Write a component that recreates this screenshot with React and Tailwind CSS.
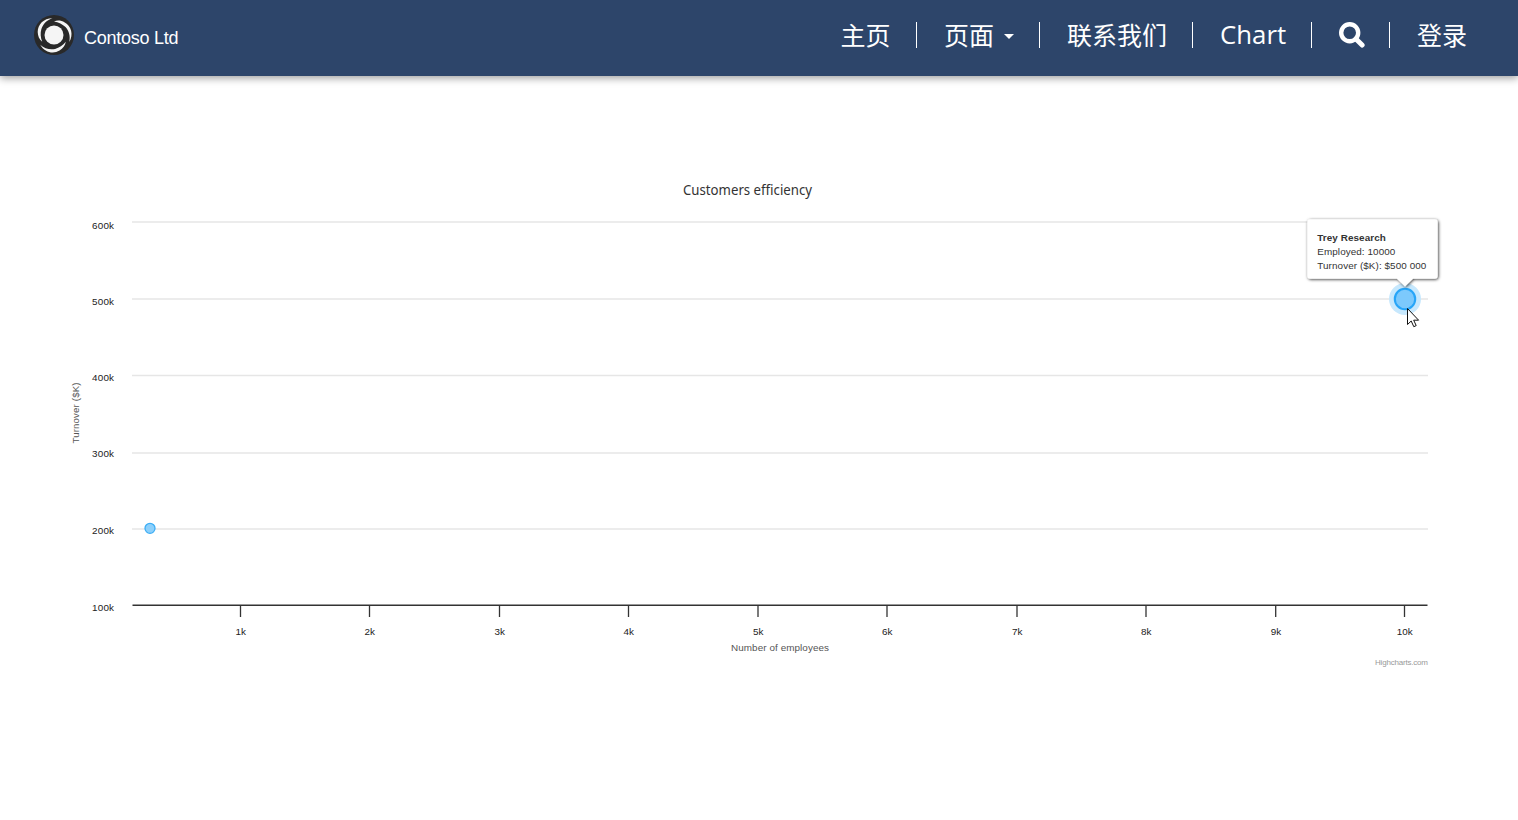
import React from 'react';

const SANS = "font-['Liberation_Sans',Arial,sans-serif]";
const NAV = "font-['Open_Sans','Noto_Sans_CJK_SC',sans-serif]";

const yTicks = [
  { label: '600k', line: 222, text: 229 },
  { label: '500k', line: 299, text: 305 },
  { label: '400k', line: 375.5, text: 381 },
  { label: '300k', line: 453, text: 457 },
  { label: '200k', line: 529, text: 534 },
  { label: '100k', line: null, text: 611 },
];

const xTicks = [240.5, 369.5, 499.5, 628.5, 758, 887, 1017, 1146, 1275.7, 1404.5];

function Logo() {
  return (
    <svg className="size-10 shrink-0" viewBox="0 0 40 40">
      <circle cx="20" cy="20" r="20" fill="#292929" />
      <circle cx="20" cy="20" r="9.5" fill="#f5f5f5" />
      {[0, 120, 240].map((angle) => (
        <path
          key={angle}
          transform={`rotate(${angle} 20 20)`}
          d="M18.5 3.2C9.5 3.2 3.7 9.5 3.7 17C3.8 21 5.2 24.3 8.2 26.8C6.5 22.5 6.2 18 7.4 14C9.1 8.8 13 5 18.5 3.2Z"
          fill="#f5f5f5"
        />
      ))}
    </svg>
  );
}

function Divider() {
  return <span className="mt-[22px] h-[26px] w-px shrink-0 bg-white" />;
}

function Header() {
  return (
    <header className="flex h-[76px] items-start bg-[#2d456a] text-white shadow-[0_2px_8px_rgba(0,0,0,0.4)]">
      <a className="flex pl-[34px] pt-[15px]">
        <Logo />
        <span className={`${SANS} ml-[10px] mt-[10px] text-[18px] leading-[26px] tracking-[-0.26px]`}>Contoso Ltd</span>
      </a>
      <nav className={`${NAV} ml-auto mr-[50px] flex items-start whitespace-nowrap text-[25px] leading-[70px]`}>
        <a className="w-[75.5px]">主页</a>
        <Divider />
        <a className="flex w-[122px] pl-[27px]">
          <span className="w-[50px]">页面</span>
          <svg className="ml-[10px] mt-[34px] h-[5px] w-[10px]" viewBox="0 0 10 5"><path d="M0 0H10L5 5Z" fill="white" /></svg>
        </a>
        <Divider />
        <a className="w-[152px] pl-[27px]">联系我们</a>
        <Divider />
        <a className="w-[118px] pl-[27px] text-[25.8px] leading-[68px]">Chart</a>
        <Divider />
        <a className="w-[77px] pl-[27px]">
          <svg className="mt-[22px] size-[26px]" viewBox="0 0 26 26" fill="none" stroke="white">
            <circle cx="10.7" cy="10.7" r="8.5" strokeWidth="4.4" />
            <path d="M17 17L23.1 23" strokeWidth="5" strokeLinecap="round" />
          </svg>
        </a>
        <Divider />
        <a className="w-[78px] pl-[27px]">登录</a>
      </nav>
    </header>
  );
}

function Chart() {
  return (
    <svg className={`${SANS} block h-[744px] w-[1518px]`} viewBox="0 76 1518 744">
      <defs>
        <filter id="tipShadow" x="-10%" y="-15%" width="125%" height="140%">
          <feDropShadow dx="0.8" dy="0.8" stdDeviation="1.7" floodColor="#000" floodOpacity="0.8" />
        </filter>
      </defs>
      <text x="683" y="195" textLength="129" lengthAdjust="spacingAndGlyphs" fontSize="15" fill="#333" className="font-['Noto_Sans',sans-serif]">Customers efficiency</text>

      {yTicks.map((t) => (
        <g key={t.label}>
          {t.line && <path d={`M132 ${t.line}H1428`} stroke="#e6e6e6" strokeWidth="1.4" />}
          <text x="92" y={t.text} textLength="22" fontSize="9.9" fill="#222">{t.label}</text>
        </g>
      ))}
      <text transform="translate(79.2 443.5) rotate(-90)" textLength="61" fontSize="9.6" fill="#555">Turnover ($K)</text>

      <path d="M132.5 605.2H1427.5" stroke="#333" strokeWidth="1.4" />
      {xTicks.map((x, i) => (
        <g key={x}>
          <path d={`M${x} 605V617`} stroke="#333" strokeWidth="1.3" />
          <text x={x + 0.3} y="635" textAnchor="middle" fontSize="9.9" fill="#222">{i + 1}k</text>
        </g>
      ))}
      <text x="731" y="651" textLength="98" fontSize="9.9" fill="#555">Number of employees</text>
      <text x="1375" y="665" textLength="53" fontSize="8" fill="#999">Highcharts.com</text>

      <circle cx="150" cy="528.3" r="5" fill="#8dd0fb" stroke="#3daef5" strokeWidth="1.3" />
      <circle cx="1405" cy="299" r="16" fill="#c7e8fd" />
      <circle cx="1405" cy="299" r="10.2" fill="#7cc9fc" stroke="#27a5f8" strokeWidth="2.1" />

      <path
        d="M1310.3 219.3H1434.7Q1437.7 219.3 1437.7 222.3V275.7Q1437.7 278.7 1434.7 278.7H1413L1405 286.5L1397 278.7H1310.3Q1307.3 278.7 1307.3 275.7V222.3Q1307.3 219.3 1310.3 219.3Z"
        fill="white"
        filter="url(#tipShadow)"
      />
      <g fontSize="9.9" fill="#333">
        <text x="1317.3" y="241" textLength="68.5" fontWeight="bold">Trey Research</text>
        <text x="1317.3" y="255" textLength="78">Employed: 10000</text>
        <text x="1317.3" y="269" textLength="109">Turnover ($K): $500 000</text>
      </g>
      <path d="M1407.5 308.5V324.5L1411.2 321L1413.8 326.7L1416.2 325.6L1413.7 320.2H1418.6Z" fill="white" stroke="#111" strokeWidth="1" />
    </svg>
  );
}

export default function App() {
  return (
    <div className="h-[820px] w-[1518px] overflow-hidden bg-white">
      <Header />
      <main><Chart /></main>
    </div>
  );
}
